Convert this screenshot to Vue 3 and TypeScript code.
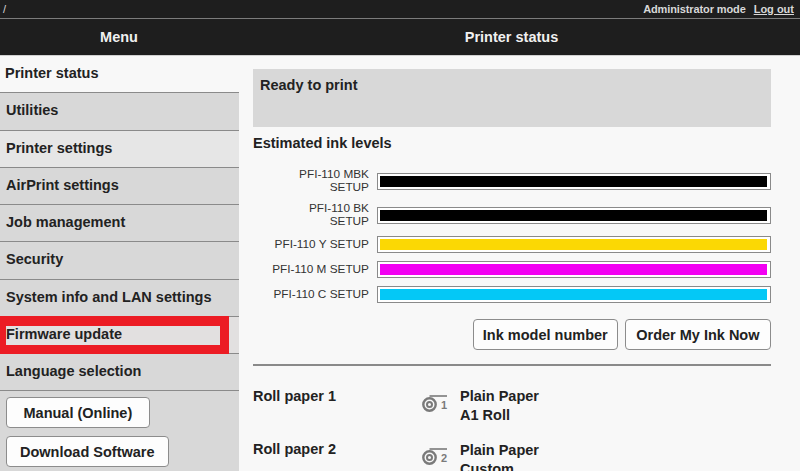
<script setup lang="ts">
const menu = [
  { label: 'Printer status', tone: 'active' },
  { label: 'Utilities', tone: 'dark' },
  { label: 'Printer settings', tone: 'light' },
  { label: 'AirPrint settings', tone: 'dark' },
  { label: 'Job management', tone: 'dark' },
  { label: 'Security', tone: 'dark' },
  { label: 'System info and LAN settings', tone: 'dark' },
  { label: 'Firmware update', tone: 'flag' },
  { label: 'Language selection', tone: 'dark' },
]
const inks = [
  { name: 'PFI-110 MBK SETUP', color: '#000000', cls: 'tall' },
  { name: 'PFI-110 BK SETUP', color: '#000000', cls: 'tall' },
  { name: 'PFI-110 Y SETUP', color: '#fbd804', cls: '' },
  { name: 'PFI-110 M SETUP', color: '#f200f2', cls: '' },
  { name: 'PFI-110 C SETUP', color: '#04c8f6', cls: '' },
]
const rolls = [
  { title: 'Roll paper 1', num: '1', lines: ['Plain Paper', 'A1 Roll'] },
  { title: 'Roll paper 2', num: '2', lines: ['Plain Paper', 'Custom'] },
]
</script>

<template>
  <div class="page">
    <div class="topbar">
      <span class="slash">/</span>
      <span class="admin">Administrator mode</span>
      <a class="logout">Log out</a>
    </div>
    <div class="headbar">
      <div class="head-menu">Menu</div>
      <div class="head-title">Printer status</div>
    </div>
    <div class="body">
      <aside class="side">
        <div v-for="m in menu" :key="m.label" class="item" :class="m.tone">{{ m.label }}</div>
        <div class="side-btns">
          <button class="btn manual">Manual (Online)</button>
          <button class="btn download">Download Software</button>
        </div>
        <div class="redbox"></div>
      </aside>
      <main class="main">
        <div class="status">Ready to print</div>
        <h2 class="ink-title">Estimated ink levels</h2>
        <div class="inks">
          <div v-for="i in inks" :key="i.name" class="ink" :class="i.cls">
            <div class="ink-name">{{ i.name }}</div>
            <div class="ink-bar"><div class="ink-fill" :style="{ background: i.color }"></div></div>
          </div>
        </div>
        <div class="actions">
          <button class="btn action">Ink model number</button>
          <button class="btn action order">Order My Ink Now</button>
        </div>
        <hr class="rule" />
        <div class="rolls">
          <div v-for="r in rolls" :key="r.title" class="roll">
            <div class="roll-title">{{ r.title }}</div>
            <div class="roll-icon">
              <svg width="26" height="20" viewBox="0 0 26 20">
                <circle cx="7.5" cy="10.5" r="6.2" fill="none" stroke="#7a7a7a" stroke-width="2.4" />
                <circle cx="7.5" cy="10.5" r="2.5" fill="none" stroke="#7a7a7a" stroke-width="2" />
                <path d="M7.5 2H25" fill="none" stroke="#7a7a7a" stroke-width="1.6" />
              </svg>
              <span class="roll-num">{{ r.num }}</span>
            </div>
            <div class="roll-text"><div v-for="l in r.lines" :key="l">{{ l }}</div></div>
          </div>
        </div>
      </main>
    </div>
  </div>
</template>

<style>
html, body { margin: 0; overflow: hidden; background: #f8f8f8; }
</style>

<style scoped>
.page {
  width: 800px;
  height: 471px;
  overflow: hidden;
  font-family: "Liberation Sans", Arial, sans-serif;
  color: #222;
  background: #f8f8f8;
}
.topbar {
  height: 18px;
  background: #1e1e1e;
  border-bottom: 1px solid #7c7c7c;
  display: flex;
  align-items: center;
  color: #d8d8d8;
  font-size: 11px;
  font-weight: bold;
  padding: 0 6px 0 3px;
}
.slash { margin-right: auto; font-weight: normal; }
.admin { letter-spacing: -0.01em; }
.logout { margin-left: 8px; text-decoration: underline; }
.headbar {
  height: 36px;
  background: #1e1e1e;
  border-bottom: 1px solid #d0d0d0;
  display: flex;
  align-items: center;
  color: #f0f0f0;
  font-size: 14.5px;
  font-weight: bold;
}
.head-menu { width: 238px; text-align: center; }
.head-title { width: 547px; text-align: center; }
.body { display: flex; height: 415px; }
.side { width: 239px; flex: none; position: relative; background: #d8d8d8; }
.item {
  height: 36.25px;
  border-bottom: 1px solid #8a8a8a;
  padding-left: 6px;
  font-size: 14.5px;
  font-weight: bold;
  line-height: 35px;
  color: #222;
}
.item.active { background: #f8f8f8; padding-left: 5px; }
.item.dark { background: #d8d8d8; }
.item.light { background: #e6e6e6; }
.item.flag { background: #e2e0e0; }
.side-btns {
  padding: 6px 0 0 6px;
  display: flex;
  flex-direction: column;
  align-items: flex-start;
  gap: 8px;
}
.btn {
  height: 31px;
  background: #fdfdfd;
  border: 1px solid #8c8c8c;
  border-radius: 4px;
  font-family: inherit;
  font-size: 14.5px;
  font-weight: bold;
  color: #222;
}
.manual { padding: 0 16.5px; }
.download { padding: 0 13px; }
.action { padding: 0 9px; }
.action.order { padding: 0 10.5px; }
.redbox {
  position: absolute;
  left: 0;
  top: 260px;
  width: 229px;
  height: 38px;
  box-sizing: border-box;
  border: solid #ec1c24;
  border-width: 10px 9px 9px 6px;
}
.main { flex: 1; padding: 13px 29px 0 14px; min-width: 0; }
.status {
  height: 58px;
  box-sizing: border-box;
  background: #d8d8d8;
  padding: 8px 7px;
  font-size: 14.5px;
  font-weight: bold;
}
.ink-title {
  margin: 8px 0 0;
  font-size: 14.5px;
  line-height: 17px;
  font-weight: bold;
}
.inks { margin-top: 16px; display: flex; flex-direction: column; gap: 8px; }
.ink { display: flex; align-items: center; gap: 8px; height: 17px; }
.ink.tall { height: 26px; }
.ink-name {
  width: 116px;
  flex: none;
  box-sizing: border-box;
  padding-left: 26px;
  text-align: right;
  font-size: 11.8px;
  line-height: 13.5px;
  color: #333;
}
.ink:not(.tall) .ink-name { padding-left: 0; }
.ink-bar {
  flex: 1;
  height: 17px;
  box-sizing: border-box;
  border: 1px solid #8a8a8a;
  background: #fff;
  padding: 2px 3px 2px 2px;
}
.ink-fill { height: 100%; }
.actions { display: flex; justify-content: flex-end; gap: 7px; margin-top: 16px; }
.rule { border: 0; border-top: 2px solid #8a8a8a; margin: 14px 0 0; }
.rolls { margin-top: 21px; }
.roll { display: flex; height: 54px; }
.roll:nth-child(2) .roll-title { margin-top: -1px; }
.roll:nth-child(2) .roll-icon { margin-top: -1px; }
.roll-title { width: 169px; padding-top: 1px; font-size: 14.5px; font-weight: bold; line-height: 17px; }
.roll-icon { width: 38px; position: relative; padding-top: 7px; }
.roll-num { position: absolute; left: 19px; top: 12px; font-size: 11px; line-height: 12px; font-weight: bold; color: #7a7a7a; }
.roll-text { font-size: 14.5px; font-weight: bold; line-height: 19px; }
</style>
